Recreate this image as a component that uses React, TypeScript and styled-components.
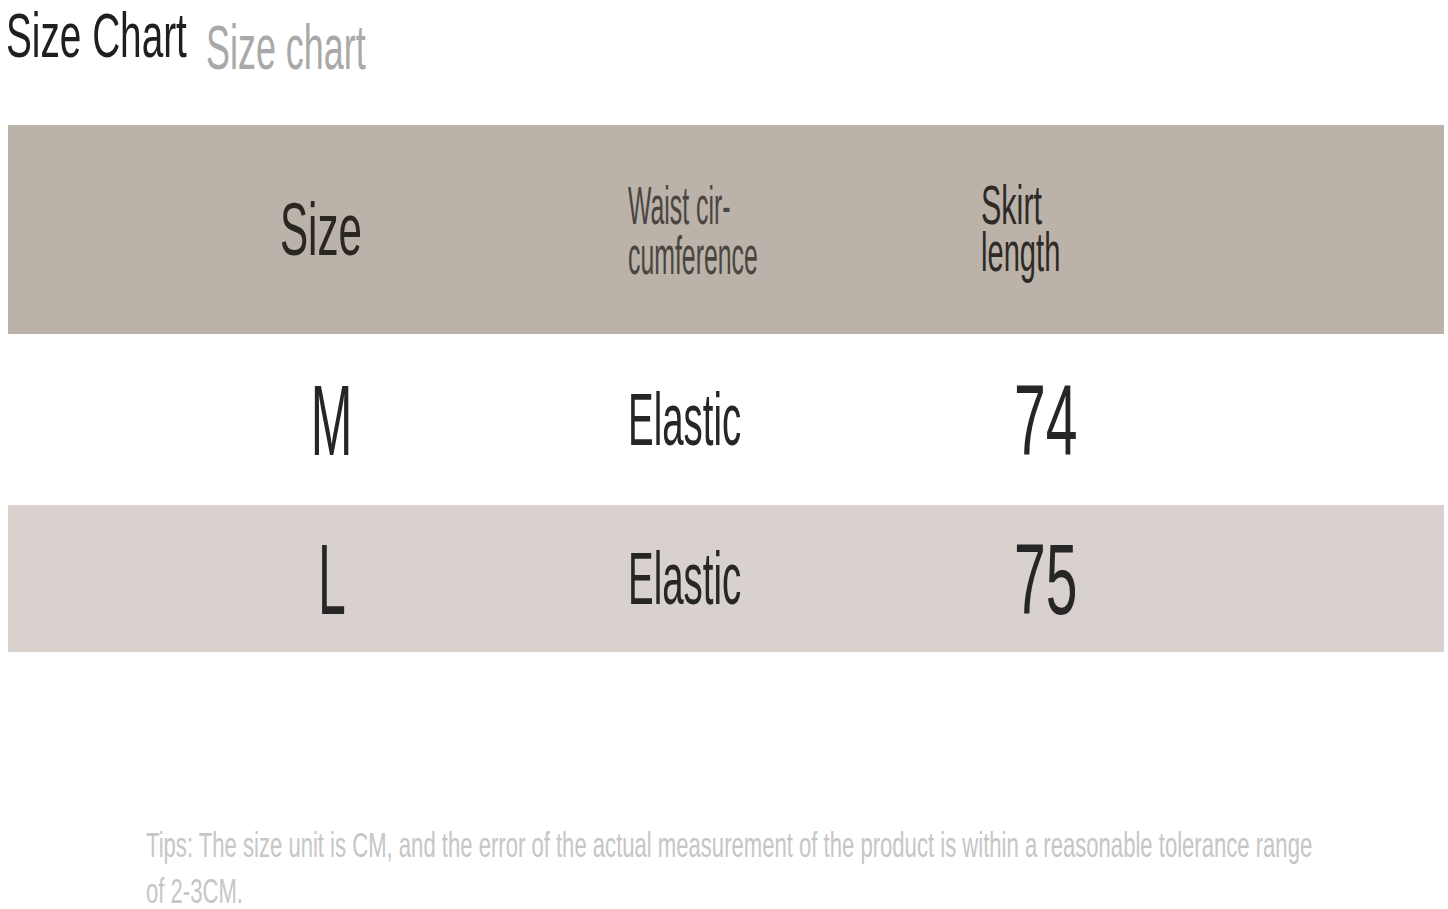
import React from "react";
import styled, { createGlobalStyle } from "styled-components";

const Global = createGlobalStyle`
  html, body { margin: 0; padding: 0; background: #ffffff; }
  body { font-family: "Liberation Sans", Arial, sans-serif; }
  * { box-sizing: border-box; }
`;

const Page = styled.main`
  width: 1448px;
  height: 909px;
  overflow: hidden;
  background: #ffffff;
`;

const Squash = styled.span<{ $sx: number; $origin?: "left" | "center" }>`
  display: inline-block;
  white-space: nowrap;
  transform: scaleX(${(p) => p.$sx});
  transform-origin: ${(p) => p.$origin ?? "left"} center;
`;

const TitleRow = styled.header`
  display: flex;
  align-items: flex-start;
  height: 125px;
  padding-left: 6px;
`;

const Title = styled.h1`
  margin: 0;
  width: 200px;
  font-size: 63px;
  line-height: 70px;
  font-weight: 400;
  color: #1f1f1f;
`;

const Subtitle = styled.h2`
  margin: 12px 0 0;
  font-size: 63px;
  line-height: 70px;
  font-weight: 400;
  color: #a9a9a9;
`;

const Table = styled.section`
  margin-left: 8px;
  width: 1436px;
`;

const Row = styled.div<{ $bg: string; $h: number }>`
  display: grid;
  grid-template-columns: 620px 353px 1fr;
  height: ${(p) => p.$h}px;
  background: ${(p) => p.$bg};
`;

const Cell = styled.div<{ $center?: boolean; $pl?: number }>`
  display: flex;
  align-items: center;
  justify-content: ${(p) => (p.$center ? "center" : "flex-start")};
  padding-left: ${(p) => p.$pl ?? 0}px;
`;

const HeadBig = styled.div`
  font-size: 74px;
  line-height: 74px;
  color: #2a2622;
`;

const HeadStack = styled.div<{ $size: number; $lh: number; $color: string; $mt?: number }>`
  display: flex;
  flex-direction: column;
  font-size: ${(p) => p.$size}px;
  line-height: ${(p) => p.$lh}px;
  color: ${(p) => p.$color};
  margin-top: ${(p) => p.$mt ?? 0}px;
`;

const Value = styled.div<{ $size: number }>`
  font-size: ${(p) => p.$size}px;
  line-height: ${(p) => p.$size}px;
  color: #262626;
`;

const Tips = styled.p`
  margin: 170px 0 0 146px;
  font-size: 35px;
  line-height: 46px;
  color: #c6c6c6;
  display: flex;
  flex-direction: column;
`;

type SizeRow = { size: string; waist: string; length: string; bg: string; h: number };

const rows: SizeRow[] = [
  { size: "M", waist: "Elastic", length: "74", bg: "#ffffff", h: 171 },
  { size: "L", waist: "Elastic", length: "75", bg: "#d9d1ce", h: 147 },
];

export default function App() {
  return (
    <Page>
      <Global />
      <TitleRow>
        <Title>
          <Squash $sx={0.615}>Size Chart</Squash>
        </Title>
        <Subtitle>
          <Squash $sx={0.57}>Size chart</Squash>
        </Subtitle>
      </TitleRow>
      <Table>
        <Row $bg="#bbb3a9" $h={209}>
          <Cell $center $pl={6}>
            <HeadBig>
              <Squash $sx={0.57} $origin="center">Size</Squash>
            </HeadBig>
          </Cell>
          <Cell>
            <HeadStack $size={54} $lh={50} $color="#4a4540">
              <Squash $sx={0.46}>Waist cir-</Squash>
              <Squash $sx={0.46}>cumference</Squash>
            </HeadStack>
          </Cell>
          <Cell>
            <HeadStack $size={56} $lh={47} $color="#2e2a26" $mt={-4}>
              <Squash $sx={0.545}>Skirt</Squash>
              <Squash $sx={0.52}>length</Squash>
            </HeadStack>
          </Cell>
        </Row>
        {rows.map((r) => (
          <Row key={r.size} $bg={r.bg} $h={r.h}>
            <Cell $center $pl={28}>
              <Value $size={100}>
                <Squash $sx={0.5} $origin="center">{r.size}</Squash>
              </Value>
            </Cell>
            <Cell>
              <Value $size={74}>
                <Squash $sx={0.52}>{r.waist}</Squash>
              </Value>
            </Cell>
            <Cell $pl={33}>
              <Value $size={100}>
                <Squash $sx={0.57}>{r.length}</Squash>
              </Value>
            </Cell>
          </Row>
        ))}
      </Table>
      <Tips>
        <Squash $sx={0.631}>
          Tips: The size unit is CM, and the error of the actual measurement of the product is within a reasonable tolerance range
        </Squash>
        <Squash $sx={0.631}>of 2-3CM.</Squash>
      </Tips>
    </Page>
  );
}
